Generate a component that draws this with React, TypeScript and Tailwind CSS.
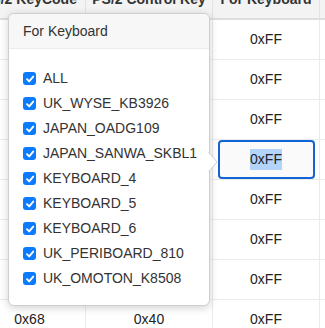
import React from 'react';

// first two columns are covered by the popover except the last row
const rows = [
  ['', '', '0xFF'],
  ['', '', '0xFF'],
  ['', '', '0xFF'],
  ['', '', '0xFF'],
  ['', '', '0xFF'],
  ['', '', '0xFF'],
  ['', '', '0xFF'],
  ['0x68', '0x40', '0xFF'],
];

const keyboards = [
  'ALL',
  'UK_WYSE_KB3926',
  'JAPAN_OADG109',
  'JAPAN_SANWA_SKBL1',
  'KEYBOARD_4',
  'KEYBOARD_5',
  'KEYBOARD_6',
  'UK_PERIBOARD_810',
  'UK_OMOTON_K8508',
];

const EDIT_ROW = 3;

function Check() {
  return (
    <span className="flex h-[13px] w-[13px] shrink-0 items-center justify-center rounded-[3px] bg-[#0a7aff]">
      <svg width="10" height="10" viewBox="0 0 10 10" fill="none">
        <path d="M2 5.2 L4.2 7.4 L8.2 2.6" stroke="white" strokeWidth="1.9" strokeLinecap="round" strokeLinejoin="round" />
      </svg>
    </span>
  );
}

export default function App() {
  return (
    <div className="relative h-[328px] w-[325px] overflow-hidden bg-white font-['Liberation_Sans',Arial,sans-serif] text-[14px] text-[#222]">
      {/* table, scrolled a bit */}
      <div className="-ml-[26px] -mt-[20px] w-[460px]">
        <div className="grid h-[40px] grid-cols-[112px_127px_107px_114px] border-b-2 border-[#dedede] bg-[#f3f3f3] font-bold text-[#333]">
          <div className="flex items-center justify-center border-r border-[#e2e2e2]">PS/2 KeyCode</div>
          <div className="flex items-center justify-center border-r border-[#e2e2e2]">PS/2 Control Key</div>
          <div className="flex items-center justify-center border-r border-[#e2e2e2]">For Keyboard</div>
          <div className="flex items-center justify-center">Note</div>
        </div>
        {rows.map((r, i) => (
          <div key={i} className="grid h-[40px] grid-cols-[112px_127px_107px_114px] border-b border-[#ebebeb]">
            <div className="flex items-center justify-center border-r border-[#ebebeb]">{r[0]}</div>
            <div className="flex items-center justify-center border-r border-[#ebebeb]">{r[1]}</div>
            <div className="flex items-center justify-center border-r border-[#ebebeb]">
              {i === EDIT_ROW ? (
                <div className="flex h-[39px] w-[97px] items-center justify-center rounded-[4px] border-2 border-[#1264d4] bg-[#fafafa]">
                  <span className="bg-[#b3d3fb]">{r[2]}</span>
                </div>
              ) : (
                r[2]
              )}
            </div>
            <div />
          </div>
        ))}
      </div>

      {/* popover */}
      <div className="absolute left-[8px] top-[13px] h-[293px] w-[202px] rounded-[6px] border border-[#cfcfcf] bg-white shadow-[0_2px_8px_rgba(0,0,0,0.18)]">
        <div className="flex h-[35px] items-center rounded-t-[6px] border-b border-[#ebebeb] bg-[#f7f7f7] pl-[14px] text-[#333]">
          For Keyboard
        </div>
        <div className="flex flex-col pl-[14px] pt-[17px]">
          {keyboards.map((k) => (
            <div key={k} className="flex h-[25px] items-center gap-[7px] text-[#333]">
              <Check />
              <span>{k}</span>
            </div>
          ))}
        </div>
        <svg className="absolute right-[-10px] top-[137px]" width="11" height="22" viewBox="0 0 11 22">
          <path d="M0 1 L9 11 L0 21 Z" fill="white" />
          <path d="M0.5 1 L9 11 L0.5 21" fill="none" stroke="#cfcfcf" strokeWidth="1" />
        </svg>
      </div>
    </div>
  );
}
